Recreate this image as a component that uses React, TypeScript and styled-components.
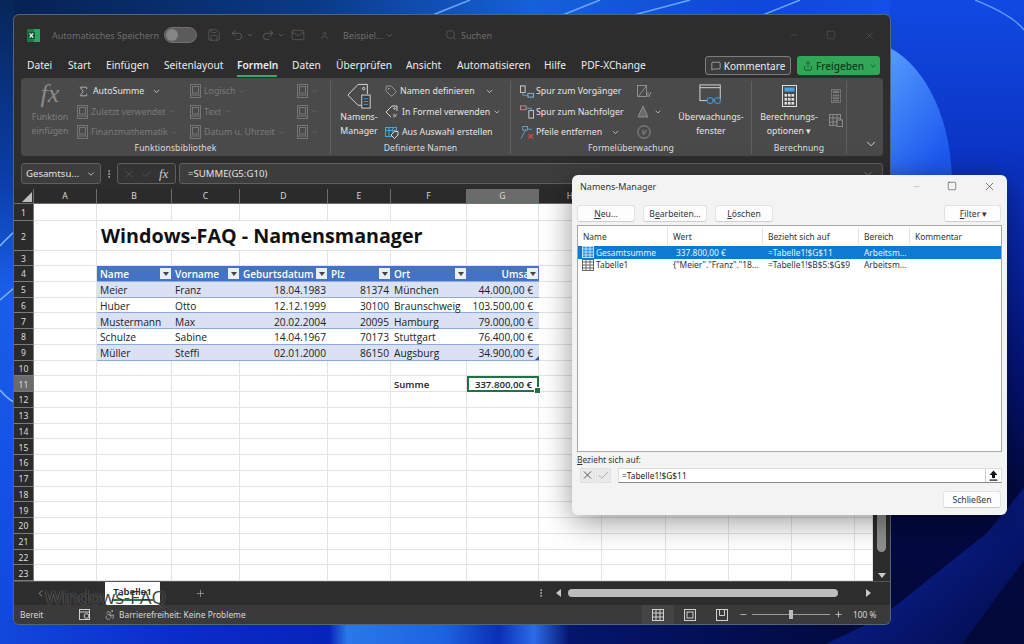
import React from "react";
import styled, { createGlobalStyle } from "styled-components";
import { Sigma, Undo2, Redo2, Search, Save, ChevronDown, ChevronLeft, Minus, Square, X, Plus, Check, Tag, MessageSquare, Share, User, Mail, MoreVertical, Accessibility } from "lucide-react";

const UI = `"Noto Sans", "Open Sans", sans-serif`;

const Global = createGlobalStyle`
  html, body { margin: 0; padding: 0; width: 1024px; height: 644px; overflow: hidden; background: #061f5c; }
  * { box-sizing: border-box; }
  body { font-family: ${UI}; }
`;

const Desktop = styled.div`
  position: relative;
  width: 1024px;
  height: 644px;
  padding: 15px 0 0 14px;
  overflow: hidden;
`;
const Wallpaper = styled.svg`
  position: absolute;
  inset: 0;
  width: 1024px;
  height: 644px;
`;
const ExcelWindow = styled.div`
  position: relative;
  width: 876px;
  height: 609px;
  display: flex;
  flex-direction: column;
  background: #2d2d2d;
  border-radius: 5px;
  overflow: hidden;
  box-shadow: 0 0 0 1px #56647a;
`;
const TitleBar = styled.div`
  height: 35px;
  flex: none;
  display: flex;
  align-items: center;
  padding: 5px 0 0 13px;
  color: #6d6d6d;
  font-size: 9px;
  white-space: nowrap;
`;
const Slot = styled.div<{ $w: number }>`
  width: ${(p) => p.$w}px;
  flex: none;
  display: flex;
  align-items: center;
  gap: 2px;
`;
const Toggle = styled.div`
  width: 33px;
  height: 16px;
  border-radius: 8px;
  background: #5b5b5b;
  border: 1px solid #707070;
  padding: 1px;
  &::before {
    content: "";
    display: block;
    width: 12px;
    height: 12px;
    border-radius: 50%;
    background: #858585;
  }
`;
const TabBar = styled.div`
  height: 28px;
  flex: none;
  display: flex;
  align-items: flex-start;
  padding-left: 13px;
  position: relative;
`;
const RibbonTab = styled.div<{ $w: number; $active?: boolean }>`
  width: ${(p) => p.$w}px;
  flex: none;
  height: 20px;
  margin-top: 6px;
  line-height: 19px;
  font-size: 10.2px;
  color: #ececec;
  white-space: nowrap;
  font-weight: ${(p) => (p.$active ? 600 : 400)};
  position: relative;
  ${(p) =>
    p.$active &&
    `&::after{content:"";position:absolute;left:0;width:40px;bottom:-1px;height:2px;background:#35a86a;}`}
`;
const TabActions = styled.div`
  margin-left: auto;
  margin-top: 6px;
  display: flex;
  gap: 6px;
  padding-right: 10px;
`;
const CommentButton = styled.div`
  width: 86px;
  height: 19px;
  border: 1px solid #7d7d7d;
  border-radius: 3px;
  background: #3b3b3b;
  display: flex;
  align-items: center;
  justify-content: center;
  gap: 3px;
  font-size: 10px;
  color: #ececec;
`;
const ShareButton = styled.div`
  width: 83px;
  height: 19px;
  border-radius: 3px;
  background: #2fa757;
  display: flex;
  align-items: center;
  gap: 3px;
  padding: 0 3px 0 6px;
  font-size: 10px;
  color: #0c3a1d;
  font-weight: 500;
  & > svg:last-child {
    margin-left: auto;
  }
`;
const Ribbon = styled.div`
  height: 78px;
  margin: 0 7px;
  flex: none;
  background: #4a4a4a;
  border-radius: 4px;
  display: flex;
  position: relative;
`;
const Group = styled.div<{ $w: number }>`
  width: ${(p) => p.$w}px;
  flex: none;
  display: flex;
  flex-direction: column;
  margin: 3px 0 2px;
  border-right: 1px solid #606060;
`;
const GroupBody = styled.div`
  height: 62px;
  display: flex;
  align-items: flex-start;
`;
const GroupLabel = styled.div`
  text-align: center;
  font-size: 8.6px;
  color: #dedede;
  line-height: 11px;
  letter-spacing: 0.1px;
`;
const BigButton = styled.div<{ $w: number; $ml?: number; $dim?: boolean }>`
  width: ${(p) => p.$w}px;
  margin-left: ${(p) => p.$ml ?? 0}px;
  flex: none;
  display: flex;
  flex-direction: column;
  align-items: center;
  text-align: center;
  font-size: 8.8px;
  line-height: 13.5px;
  color: ${(p) => (p.$dim ? "#7f7f7f" : "#e6e6e6")};
  height: 60px;
`;
const BigIcon = styled.div`
  height: 30px;
  display: flex;
  align-items: center;
  justify-content: center;
  flex: none;
`;
const FxGlyph = styled.span`
  font-family: "Liberation Serif", serif;
  font-style: italic;
  font-size: 26px;
  color: #8a8a8a;
  line-height: 1;
  padding-bottom: 5px;
`;
const SmallColumn = styled.div<{ $w: number; $ml?: number }>`
  width: ${(p) => p.$w}px;
  margin-left: ${(p) => p.$ml ?? 0}px;
  flex: none;
  display: flex;
  flex-direction: column;
`;
const SmallItem = styled.div<{ $dim?: boolean; $gap?: number }>`
  height: 20.5px;
  display: flex;
  align-items: center;
  gap: ${(p) => p.$gap ?? 3}px;
  white-space: nowrap;
  font-size: 8.8px;
  color: ${(p) => (p.$dim ? "#7a7a7a" : "#e6e6e6")};
`;
const CalcColumn = styled.div`
  width: 16px;
  margin-left: 6px;
  flex: none;
  display: flex;
  flex-direction: column;
  align-items: center;
  gap: 11px;
  padding-top: 8px;
`;
const Collapse = styled.div`
  position: absolute;
  right: 5px;
  bottom: 5px;
  color: #e6e6e6;
  display: flex;
`;
const FormulaRow = styled.div`
  height: 21px;
  margin: 7px 7px 5px;
  flex: none;
  display: flex;
  align-items: stretch;
  color: #e2e2e2;
  font-size: 9.6px;
`;
const NameBox = styled.div`
  width: 80px;
  background: #3d3d3d;
  border: 1px solid #5f5f5f;
  border-radius: 3px;
  display: flex;
  align-items: center;
  justify-content: space-between;
  padding: 0 4px;
`;
const Dots = styled.div`
  width: 16px;
  display: flex;
  align-items: center;
  justify-content: center;
`;
const FxBox = styled.div`
  width: 59px;
  border: 1px solid #5f5f5f;
  border-radius: 3px;
  background: #333;
  display: flex;
  align-items: center;
  gap: 6px;
  padding-left: 5px;
  margin-right: 3px;
  color: #666;
`;
const FxSmall = styled.span`
  font-family: "Liberation Serif", serif;
  font-style: italic;
  font-size: 13px;
  color: #cfcfcf;
`;
const FormulaInput = styled.div`
  flex: 1;
  background: #3d3d3d;
  border: 1px solid #5f5f5f;
  border-radius: 3px;
  display: flex;
  align-items: center;
  padding: 0 8px;
  justify-content: space-between;
`;
const SheetArea = styled.div`
  height: 392px;
  flex: none;
  display: flex;
`;
const Grid = styled.div`
  width: 859px;
  flex: none;
  display: grid;
  grid-template-columns: 20px 63px 75px 68px 88px 63px 76px 72px 63px 64px 63px 63px 63px 18px;
  grid-template-rows: 15px 17px 30px 15px repeat(20, 15.75px);
`;
const ColHead = styled.div<{ $sel?: boolean; $corner?: boolean }>`
  background: ${(p) => (p.$sel ? "#6b6b6b" : "#2b2b2b")};
  color: #d8d8d8;
  font-size: 8.6px;
  display: flex;
  align-items: center;
  justify-content: center;
  border-right: 1px solid #6d6d6d;
  border-bottom: 1px solid ${(p) => (p.$sel ? "#2f9a62" : "#6d6d6d")};
  position: relative;
  ${(p) =>
    p.$corner &&
    `&::after{content:"";position:absolute;right:1px;bottom:1px;border-style:solid;border-width:0 0 10px 10px;border-color:transparent transparent #bdbdbd transparent;}`}
`;
const RowHead = styled.div<{ $sel?: boolean }>`
  background: ${(p) => (p.$sel ? "#6b6b6b" : "#2b2b2b")};
  color: #dcdcdc;
  font-size: 8.6px;
  display: flex;
  align-items: center;
  justify-content: center;
  padding-top: 2px;
  border-bottom: 1px solid #7a7a7a;
  border-right: 1px solid #7a7a7a;
`;
type CellKind = "plain" | "head" | "band" | "even";
const cellBg: Record<CellKind, string> = { plain: "#fff", head: "#4472c4", band: "#d9e1f2", even: "#fff" };
const Cell = styled.div<{ $kind: CellKind; $right?: boolean; $bold?: boolean; $noLine?: boolean; $pad?: number; $title?: boolean; $active?: boolean; $corner?: boolean }>`
  position: relative;
  min-width: 0;
  background: ${(p) => cellBg[p.$kind]};
  border-bottom: 1px solid ${(p) => (p.$kind === "plain" ? "#e3e3e3" : "#8ea9db")};
  border-right: ${(p) => (p.$noLine ? "0" : p.$kind === "plain" ? "1px solid #e3e3e3" : "0")};
  color: ${(p) => (p.$kind === "head" ? "#fff" : "#222")};
  font-family: "Open Sans", sans-serif;
  font-size: ${(p) => (p.$kind === "head" ? 10 : p.$bold ? 9.6 : 10.2)}px;
  font-weight: ${(p) => (p.$bold || p.$kind === "head" ? 600 : 400)};
  display: flex;
  align-items: center;
  white-space: nowrap;
  justify-content: ${(p) => (p.$right ? "flex-end" : "flex-start")};
  padding: ${(p) => (p.$title ? 0 : 2)}px ${(p) => p.$pad ?? 2}px 0 3px;
  ${(p) => p.$title && `z-index:2;overflow:visible;`}
  ${(p) =>
    p.$active &&
    `outline:2px solid #217346;outline-offset:-2px;z-index:2;&::after{content:"";position:absolute;right:-3px;bottom:-3px;width:5px;height:5px;background:#217346;border:1px solid #fff;}`}
  ${(p) =>
    p.$corner &&
    `&::after{content:"";position:absolute;right:0;bottom:0;border-style:solid;border-width:0 0 4px 4px;border-color:transparent transparent #2f5597 transparent;}`}
`;
const Title = styled.span`
  font-family: "Open Sans", sans-serif;
  font-size: 19.7px;
  font-weight: 700;
  color: #111;
  margin-left: 1px;
  overflow: visible;
`;
const FilterBtn = styled.span`
  position: absolute;
  right: 1px;
  top: 2px;
  width: 11px;
  height: 11px;
  background: #e9edf6;
  display: flex;
  align-items: center;
  justify-content: center;
  &::before {
    content: "";
    border-style: solid;
    border-width: 4px 3px 0 3px;
    border-color: #444 transparent transparent transparent;
  }
`;
const VScroll = styled.div`
  width: 17px;
  flex: none;
  background: #2c2c2c;
  position: relative;
`;
const VThumb = styled.div`
  position: absolute;
  left: 4px;
  right: 4px;
  top: 24px;
  bottom: 29px;
  border-radius: 5px;
  background: #8f8f8f;
`;
const ArrowDown = styled.div`
  position: absolute;
  left: 5px;
  bottom: 3px;
  border-style: solid;
  border-width: 5px 4px 0 4px;
  border-color: #c8c8c8 transparent transparent transparent;
`;
const TabStrip = styled.div`
  height: 24px;
  flex: none;
  background: #2d2d2d;
  border-top: 1px solid #555;
  display: flex;
  align-items: center;
  position: relative;
  color: #c9c9c9;
`;
const SheetTab = styled.div`
  width: 55px;
  height: 23px;
  background: #fff;
  color: #222;
  font-size: 9.6px;
  font-weight: 600;
  text-align: center;
  line-height: 20px;
  border-radius: 0 0 3px 3px;
  margin-top: -1px;
  position: relative;
  &::after {
    content: "";
    position: absolute;
    left: 7px;
    right: 7px;
    bottom: 4px;
    height: 2px;
    background: #217346;
  }
`;
const Watermark = styled.div`
  position: absolute;
  left: 31px;
  top: 4px;
  font-size: 18.6px;
  line-height: 22px;
  font-family: "Open Sans", sans-serif;
  color: rgba(12, 12, 12, 0.8);
  text-shadow: 0 0 1.5px rgba(255, 255, 255, 0.55);
  z-index: 3;
  white-space: nowrap;
`;
const HTrack = styled.div`
  position: absolute;
  left: 522px;
  right: 5px;
  top: 3px;
  bottom: 4px;
  display: flex;
  align-items: center;
`;
const HThumb = styled.div`
  position: absolute;
  left: 32px;
  right: 47px;
  height: 8px;
  border-radius: 4px;
  background: #bdbdbd;
`;
const TriLeft = styled.div`
  position: absolute;
  left: 20px;
  border-style: solid;
  border-width: 4px 5px 4px 0;
  border-color: transparent #c8c8c8 transparent transparent;
`;
const TriRight = styled.div`
  position: absolute;
  right: 14px;
  border-style: solid;
  border-width: 4px 0 4px 5px;
  border-color: transparent transparent transparent #c8c8c8;
`;
const StatusBar = styled.div`
  height: 19px;
  flex: none;
  background: #3a3a3a;
  display: flex;
  align-items: center;
  padding-left: 6px;
  color: #d8d8d8;
  font-size: 8.4px;
  white-space: nowrap;
`;
const ViewBtn = styled.div<{ $active?: boolean }>`
  width: 32px;
  height: 19px;
  display: flex;
  align-items: center;
  justify-content: center;
  background: ${(p) => (p.$active ? "#444" : "transparent")};
`;
const Slider = styled.div`
  width: 78px;
  height: 1px;
  background: #9a9a9a;
  margin: 0 4px;
  position: relative;
  &::after {
    content: "";
    position: absolute;
    left: 37px;
    top: -4px;
    width: 4px;
    height: 9px;
    background: #bcbcbc;
  }
`;

const Dialog = styled.div`
  position: absolute;
  left: 572px;
  top: 175px;
  width: 435px;
  height: 340px;
  background: #f3f3f3;
  border-radius: 6px;
  box-shadow: 0 6px 30px rgba(0, 0, 0, 0.42);
  display: flex;
  flex-direction: column;
  padding: 0 5px;
  color: #222;
  font-size: 8.4px;
  z-index: 5;
`;
const DialogTitle = styled.div`
  height: 30px;
  flex: none;
  display: flex;
  align-items: center;
  padding: 0 0 8px 3px;
  font-size: 9px;
  color: #333;
`;
const WinControls = styled.div`
  margin-left: auto;
  display: flex;
  align-items: center;
  gap: 26px;
  padding-right: 6px;
  color: #333;
`;
const DialogButtons = styled.div`
  height: 20px;
  flex: none;
  display: flex;
  gap: 8px;
`;
const DButton = styled.div<{ $w: number; $push?: boolean }>`
  width: ${(p) => p.$w}px;
  height: 17px;
  background: #fdfdfd;
  border: 1px solid #e2e2e2;
  border-bottom-color: #cfcfcf;
  border-radius: 3px;
  display: flex;
  align-items: center;
  justify-content: center;
  font-size: 8.6px;
  color: #333;
  margin-left: ${(p) => (p.$push ? "auto" : "0")};
  margin-right: ${(p) => (p.$push ? "1px" : "0")};
`;
const ListBox = styled.div`
  height: 227px;
  flex: none;
  background: #fff;
  border: 1px solid #a8a8a8;
`;
const ListRow = styled.div<{ $selected?: boolean; $head?: boolean }>`
  display: grid;
  grid-template-columns: 90px 95px 96px 51px 1fr;
  height: ${(p) => (p.$head ? "18px" : "12.6px")};
  margin-bottom: ${(p) => (p.$head ? "1px" : "0")};
  margin-top: ${(p) => (p.$head ? "1px" : "0")};
  background: ${(p) => (p.$selected ? "#0f7bd0" : "transparent")};
  color: ${(p) => (p.$selected ? "#e9f4ff" : "#333")};
  white-space: nowrap;
`;
const ListCell = styled.div<{ $head?: boolean; $pad?: number }>`
  display: flex;
  align-items: center;
  gap: 2px;
  overflow: hidden;
  padding-left: ${(p) => p.$pad ?? 5}px;
  border-right: ${(p) => (p.$head ? "1px solid #e5e5e5" : "0")};
`;
const RefLabel = styled.div`
  height: 12px;
  flex: none;
  margin-top: 1px;
  display: flex;
  align-items: flex-end;
  color: #333;
`;
const RefRow = styled.div`
  display: flex;
  align-items: center;
  height: 16px;
  flex: none;
  margin-top: 2px;
  padding-left: 3px;
`;
const RefIcon = styled.div<{ $dark?: boolean }>`
  width: 15px;
  height: 15px;
  background: #e9e9e9;
  border: 1px solid #e0e0e0;
  display: flex;
  align-items: center;
  justify-content: center;
  color: ${(p) => (p.$dark ? "#555" : "#9a9a9a")};
  margin-right: 1px;
`;
const RefInput = styled.div`
  flex: 1;
  margin-left: 6px;
  height: 15px;
  background: #fff;
  border: 1px solid #ddd;
  border-bottom-color: #8a8a8a;
  display: flex;
  align-items: center;
  padding-left: 3px;
  position: relative;
`;
const RefUp = styled.div`
  position: absolute;
  right: 0;
  top: 0;
  bottom: 0;
  width: 16px;
  border-left: 1px solid #ccc;
  display: flex;
  align-items: center;
  justify-content: center;
`;
const DialogFooter = styled.div`
  display: flex;
  justify-content: flex-end;
  margin-top: 8px;
  padding-right: 1px;
`;

/* ---------- drawn icons ---------- */
const s = { fill: "none", stroke: "currentColor", strokeWidth: 1 } as const;
const BookIco = () => (
  <svg width="11" height="14" viewBox="0 0 11 14" {...s} color="#767676">
    <rect x="0.5" y="0.5" width="10" height="13" />
    <rect x="2.5" y="2.5" width="6" height="6.5" />
    <path d="M0.5 11h10" />
  </svg>
);
const ExcelLogo = () => (
  <svg width="13" height="13" viewBox="0 0 13 13">
    <rect width="13" height="13" rx="1" fill="#1d7a45" />
    <rect x="7" width="6" height="13" fill="#2da562" />
    <rect x="1" y="3" width="7" height="7" fill="#0f5a30" />
    <path d="M2.6 4.4l3.6 4.2M6.2 4.4L2.6 8.6" stroke="#fff" strokeWidth="1.1" />
  </svg>
);
const NameMgrIco = () => (
  <svg width="26" height="26" viewBox="0 0 26 28" fill="none" color="#e0e0e0">
    <path d="M1 13 L12 1.5 H22 V12" stroke="currentColor" />
    <path d="M1 13 L12 24 H16" stroke="currentColor" />
    <circle cx="18" cy="6" r="1.3" stroke="currentColor" />
    <rect x="16" y="13" width="9" height="14" fill="#3a3a3a" stroke="#d8d8d8" />
    <path d="M18 17h5M18 20h5M18 23h5" stroke="#4aa3e0" />
  </svg>
);
const TagFx = () => (
  <svg width="14" height="14" viewBox="0 0 14 14" fill="none" stroke="#d8d8d8">
    <path d="M1 7 L7 1 H12 V6 M1 7 L6 12" />
    <circle cx="9.5" cy="3.5" r="0.8" />
    <path d="M9 8.5v4M11.5 9l-1.5 3" stroke="#bbb" />
  </svg>
);
const FromSel = () => (
  <svg width="14" height="13" viewBox="0 0 14 13" fill="none">
    <rect x="0.5" y="1.5" width="11" height="9" stroke="#4aa3e0" />
    <path d="M0.5 4.5h11M4 1.5v9M8 1.5v9" stroke="#4aa3e0" />
    <path d="M6 9 L9.5 5.5 H13 V9 L9.5 12.5 Z" fill="#4a4a4a" stroke="#d8d8d8" />
  </svg>
);
const TraceA = () => (
  <svg width="14" height="13" viewBox="0 0 15 13" fill="none" stroke="#d0d0d0">
    <rect x="0.5" y="0.5" width="5" height="7" />
    <rect x="8.5" y="8.5" width="6" height="4" stroke="#8fb7d8" />
    <path d="M3 7.5V10.5H8.5" stroke="#5aa5dc" />
  </svg>
);
const TraceB = () => (
  <svg width="14" height="14" viewBox="0 0 15 14" fill="none" stroke="#d0d0d0">
    <rect x="0.5" y="0.5" width="6" height="4" stroke="#c88" />
    <rect x="9.5" y="5.5" width="5" height="8" />
    <path d="M6.5 3H12V5.5" stroke="#5aa5dc" />
  </svg>
);
const RemoveArrows = () => (
  <svg width="14" height="15" viewBox="0 0 15 15" fill="none">
    <rect x="3" y="1" width="5" height="4" stroke="#5aa5dc" />
    <path d="M1 14 L6 5 M8 4 H13" stroke="#5aa5dc" />
    <path d="M9 9l5 5M14 9l-5 5" stroke="#d8484c" strokeWidth="1.4" />
  </svg>
);
const ShowFx = () => (
  <svg width="15" height="14" viewBox="0 0 15 14" fill="none" stroke="#8e8e8e">
    <rect x="0.5" y="1.5" width="9" height="11" />
    <path d="M1 13L10 1M11 8v5M14 8l-2 5" />
  </svg>
);
const WarnIco = () => (
  <svg width="14" height="14" viewBox="0 0 14 14" fill="#6a6a6a" stroke="#8e8e8e">
    <path d="M6 1 L11 12 H1 Z" />
  </svg>
);
const EvalIco = () => (
  <svg width="14" height="14" viewBox="0 0 14 14" fill="none" stroke="#8e8e8e">
    <circle cx="7" cy="7" r="6.2" />
    <path d="M6 4.5v5M9.5 5L7 9.5" />
  </svg>
);
const WatchIco = () => (
  <svg width="26" height="24" viewBox="0 0 26 26" fill="none">
    <rect x="1" y="1" width="22" height="17" stroke="#dcdcdc" />
    <path d="M1 4h22" stroke="#dcdcdc" />
    <rect x="9" y="15" width="6" height="6" rx="2" fill="#4a4a4a" stroke="#3f8fd0" strokeWidth="1.3" />
    <rect x="17" y="15" width="6" height="6" rx="2" fill="#4a4a4a" stroke="#3f8fd0" strokeWidth="1.3" />
    <path d="M15 17h2" stroke="#3f8fd0" />
  </svg>
);
const CalcIco = ({ w = 15, h = 22, dim = false }: { w?: number; h?: number; dim?: boolean }) => (
  <svg width={w} height={h} viewBox="0 0 15 22" fill="none">
    <rect x="0.5" y="0.5" width="14" height="21" stroke={dim ? "#8a8a8a" : "#e0e0e0"} />
    <rect x="2.5" y="2.5" width="10" height="4" fill={dim ? "#777" : "#4aa3e0"} />
    {[9, 13, 17].map((y) =>
      [2.5, 6, 9.5].map((x) => <rect key={`${x}${y}`} x={x} y={y} width="2.6" height="2.6" fill={dim ? "#888" : "#e0e0e0"} />)
    )}
  </svg>
);
const SheetCalc = () => (
  <svg width="14" height="13" viewBox="0 0 14 13" fill="none" stroke="#8a8a8a">
    <rect x="0.5" y="0.5" width="11" height="11" />
    <path d="M0.5 4h11M4 0.5v11M8 0.5v11M0.5 8h11" />
    <rect x="8" y="6" width="5.5" height="6.5" fill="#4a4a4a" />
  </svg>
);
const TableIco = ({ sel }: { sel?: boolean }) => (
  <svg width="12" height="12" viewBox="0 0 12 12" fill={sel ? "#2a8fe0" : "#fff"} stroke={sel ? "#bcdcf5" : "#666"}>
    <rect x="0.5" y="0.5" width="11" height="11" />
    <path d="M0.5 3h11M0.5 6h11M0.5 9h11M4 0.5v11M8 0.5v11" fill="none" />
  </svg>
);
const UploadIco = () => (
  <svg width="9" height="11" viewBox="0 0 9 11" fill="#111">
    <path d="M4.5 0.5 L8.5 5 H6 V8 H3 V5 H0.5 Z" />
    <rect x="0.5" y="9.5" width="8" height="1.2" />
  </svg>
);
const GridView = () => (
  <svg width="12" height="12" viewBox="0 0 12 12" fill="none" stroke="#d0d0d0">
    <rect x="0.5" y="0.5" width="11" height="11" />
    <path d="M0.5 4h11M0.5 8h11M4 0.5v11M8 0.5v11" />
  </svg>
);
const PageView = () => (
  <svg width="12" height="12" viewBox="0 0 12 12" fill="none" stroke="#d0d0d0">
    <rect x="0.5" y="0.5" width="11" height="11" />
    <rect x="3" y="3" width="6" height="6" />
  </svg>
);
const BreakView = () => (
  <svg width="12" height="12" viewBox="0 0 12 12" fill="none" stroke="#d0d0d0">
    <rect x="0.5" y="0.5" width="11" height="11" />
    <path d="M3.5 0.5v6h5v-6" />
  </svg>
);
const MacroIco = () => (
  <svg width="12" height="11" viewBox="0 0 12 11" fill="none" stroke="#d0d0d0">
    <rect x="0.5" y="0.5" width="10" height="10" />
    <path d="M0.5 3h10" />
    <circle cx="7.5" cy="7" r="2.4" />
  </svg>
);

const tabs: [string, number][] = [
  ["Datei", 41], ["Start", 38], ["Einfügen", 58], ["Seitenlayout", 73], ["Formeln", 55], ["Daten", 44],
  ["Überprüfen", 70], ["Ansicht", 51], ["Automatisieren", 87], ["Hilfe", 37], ["PDF-XChange", 80],
];
const cols = ["A", "B", "C", "D", "E", "F", "G", "H", "I", "J", "K", "L", "M"];
const table = [
  ["Meier", "Franz", "18.04.1983", "81374", "München", "44.000,00 €"],
  ["Huber", "Otto", "12.12.1999", "30100", "Braunschweig", "103.500,00 €"],
  ["Mustermann", "Max", "20.02.2004", "20095", "Hamburg", "79.000,00 €"],
  ["Schulze", "Sabine", "14.04.1967", "70173", "Stuttgart", "76.400,00 €"],
  ["Müller", "Steffi", "02.01.2000", "86150", "Augsburg", "34.900,00 €"],
];
const heads = ["Name", "Vorname", "Geburtsdatum", "Plz", "Ort", "Umsatz"];

function renderCell(row: number, col: number) {
  const key = `${row}-${col}`;
  if (row === 2 && col === 1) return <Cell key={key} $kind="plain" $title $noLine><Title>Windows-FAQ - Namensmanager</Title></Cell>;
  if (row === 2 && col > 1 && col < 5) return <Cell key={key} $kind="plain" $noLine />;
  if (row === 4 && col >= 1 && col <= 6) {
    return (
      <Cell key={key} $kind="head" $right={col === 6} $pad={1}>
        {heads[col - 1]}
        <FilterBtn />
      </Cell>
    );
  }
  if (row >= 5 && row <= 9 && col >= 1 && col <= 6) {
    const kind: CellKind = row % 2 === 1 ? "band" : "even";
    const pad = col === 6 ? 6 : 2;
    return (
      <Cell key={key} $kind={kind} $right={col === 3 || col === 4 || col === 6} $pad={pad} $corner={row === 9 && col === 6}>
        {table[row - 5][col - 1]}
      </Cell>
    );
  }
  if (row === 11 && col === 5) return <Cell key={key} $kind="plain" $bold>Summe</Cell>;
  if (row === 11 && col === 6) return <Cell key={key} $kind="plain" $bold $right $pad={6} $active>337.800,00 €</Cell>;
  return <Cell key={key} $kind="plain" />;
}

const Caret = ({ c = "#9a9a9a", size = 9 }: { c?: string; size?: number }) => <ChevronDown size={size} color={c} strokeWidth={2} />;

export default function App() {
  const rowNums = Array.from({ length: 23 }, (_, i) => i + 1);
  return (
    <Desktop>
      <Global />
      <Wallpaper viewBox="0 0 1024 644">
        <defs>
          <linearGradient id="top" x1="0" x2="1" y1="0" y2="0">
            <stop offset="0" stopColor="#062050" />
            <stop offset="0.35" stopColor="#0a3a86" />
            <stop offset="0.6" stopColor="#1561d8" />
            <stop offset="0.85" stopColor="#0f47d8" />
            <stop offset="1" stopColor="#1450e6" />
          </linearGradient>
          <linearGradient id="right" x1="0" x2="0" y1="0" y2="1">
            <stop offset="0" stopColor="#1149e2" />
            <stop offset="0.3" stopColor="#0a2fbc" />
            <stop offset="0.55" stopColor="#04157e" />
            <stop offset="0.75" stopColor="#020a44" />
            <stop offset="1" stopColor="#020838" />
          </linearGradient>
          <linearGradient id="orb" x1="0" x2="0.6" y1="0" y2="1">
            <stop offset="0" stopColor="#58a0ff" />
            <stop offset="1" stopColor="#1c58ee" />
          </linearGradient>
          <linearGradient id="band" x1="0" x2="1" y1="0" y2="1">
            <stop offset="0" stopColor="#0d2bb0" />
            <stop offset="1" stopColor="#020a48" />
          </linearGradient>
          <linearGradient id="leftStrip" x1="0" x2="0" y1="0" y2="1">
            <stop offset="0" stopColor="#072658" />
            <stop offset="0.28" stopColor="#0a3ea8" />
            <stop offset="0.45" stopColor="#1a5ee8" />
            <stop offset="1" stopColor="#0f48dc" />
          </linearGradient>
          <linearGradient id="bottom" x1="0" x2="1" y1="0" y2="0">
            <stop offset="0" stopColor="#1248dc" />
            <stop offset="0.2" stopColor="#0a2cc8" />
            <stop offset="0.37" stopColor="#0724b8" />
            <stop offset="0.39" stopColor="#2a78ea" />
            <stop offset="0.5" stopColor="#1c62e0" />
            <stop offset="0.56" stopColor="#0b2fb4" />
            <stop offset="0.6" stopColor="#2c6cea" />
            <stop offset="0.64" stopColor="#04156c" />
            <stop offset="1" stopColor="#020838" />
          </linearGradient>
        </defs>
        <rect width="1024" height="644" fill="url(#right)" />
        <rect width="890" height="20" fill="url(#top)" />
        <rect y="0" width="14" height="644" fill="url(#leftStrip)" />
        <rect y="620" width="890" height="24" fill="url(#bottom)" />
        <path d="M430 16 L470 0 M560 16 L600 0 M630 16 L690 0 M760 16 L800 0" stroke="#6aa6f5" strokeWidth="1.5" />
        <path d="M0 246 C5 240 10 236 14 232 M0 300 L14 288 M0 390 C5 396 10 400 14 402" stroke="#7fb3fa" strokeWidth="1.5" fill="none" />
        <path d="M884 45 C920 60 950 110 952 178 L884 178 Z" fill="url(#orb)" />
        <path d="M975 0 C995 8 1015 18 1024 30" stroke="#5f96fa" strokeWidth="1.5" fill="none" />
        <path d="M880 618 L987 533 L1024 488 L1024 560 L962 644 L826 644 Z" fill="url(#band)" />
      </Wallpaper>

      <ExcelWindow>
        <TitleBar>
          <Slot $w={25}><ExcelLogo /></Slot>
          <Slot $w={112}>Automatisches Speichern</Slot>
          <Slot $w={43}><Toggle /></Slot>
          <Slot $w={23}><Save size={14} strokeWidth={1} /></Slot>
          <Slot $w={31}><Undo2 size={14} strokeWidth={1.2} /><Caret c="#6d6d6d" size={8} /></Slot>
          <Slot $w={30}><Redo2 size={14} strokeWidth={1.2} /><Caret c="#6d6d6d" size={8} /></Slot>
          <Slot $w={29}><Mail size={14} strokeWidth={1} /></Slot>
          <Slot $w={23}><User size={9} strokeWidth={1.2} /></Slot>
          <Slot $w={102}>Beispiel...<Caret c="#6d6d6d" /></Slot>
          <Slot $w={16}><Search size={12} strokeWidth={1.2} /></Slot>
          <Slot $w={328}>Suchen</Slot>
          <Slot $w={37}><Minus size={10} strokeWidth={1} /></Slot>
          <Slot $w={38}><Square size={10} strokeWidth={1} /></Slot>
          <Slot $w={20}><X size={11} strokeWidth={1} /></Slot>
        </TitleBar>
        <TabBar>
          {tabs.map(([t, w]) => (
            <RibbonTab key={t} $w={w} $active={t === "Formeln"}>{t}</RibbonTab>
          ))}
          <TabActions>
            <CommentButton><MessageSquare size={10} strokeWidth={1.3} />Kommentare</CommentButton>
            <ShareButton><Share size={10} strokeWidth={1.5} />Freigeben<Caret c="#0c3a1d" size={8} /></ShareButton>
          </TabActions>
        </TabBar>
        <Ribbon>
          <Group $w={310}>
            <GroupBody>
              <BigButton $w={42} $ml={8} $dim>
                <BigIcon><FxGlyph>fx</FxGlyph></BigIcon>
                Funktion<br />einfügen
              </BigButton>
              <SmallColumn $w={113} $ml={6}>
                <SmallItem><Sigma size={13} strokeWidth={1.2} />AutoSumme&nbsp;&nbsp;<Caret c="#e0e0e0" /></SmallItem>
                <SmallItem $dim><BookIco />Zuletzt verwendet<Caret c="#777" size={7} /></SmallItem>
                <SmallItem $dim><BookIco />Finanzmathematik<Caret c="#777" size={7} /></SmallItem>
              </SmallColumn>
              <SmallColumn $w={107}>
                <SmallItem $dim><BookIco />Logisch<Caret c="#777" size={7} /></SmallItem>
                <SmallItem $dim><BookIco />Text<Caret c="#777" size={7} /></SmallItem>
                <SmallItem $dim><BookIco />Datum u. Uhrzeit<Caret c="#777" size={7} /></SmallItem>
              </SmallColumn>
              <SmallColumn $w={26}>
                <SmallItem $dim><BookIco /><Caret c="#777" size={7} /></SmallItem>
                <SmallItem $dim><BookIco /><Caret c="#777" size={7} /></SmallItem>
                <SmallItem $dim><BookIco /><Caret c="#777" size={7} /></SmallItem>
              </SmallColumn>
            </GroupBody>
            <GroupLabel>Funktionsbibliothek</GroupLabel>
          </Group>
          <Group $w={180}>
            <GroupBody>
              <BigButton $w={46} $ml={5}>
                <BigIcon><NameMgrIco /></BigIcon>
                Namens-<br />Manager
              </BigButton>
              <SmallColumn $w={125} $ml={3}>
                <SmallItem><Tag size={12} strokeWidth={1} />Namen definieren&nbsp;&nbsp;&nbsp;<Caret c="#e0e0e0" /></SmallItem>
                <SmallItem><TagFx />In Formel verwenden<Caret c="#e0e0e0" size={8} /></SmallItem>
                <SmallItem><FromSel />Aus Auswahl erstellen</SmallItem>
              </SmallColumn>
            </GroupBody>
            <GroupLabel>Definierte Namen</GroupLabel>
          </Group>
          <Group $w={241}>
            <GroupBody>
              <SmallColumn $w={117} $ml={9}>
                <SmallItem $gap={2}><TraceA />Spur zum Vorgänger</SmallItem>
                <SmallItem $gap={2}><TraceB />Spur zum Nachfolger</SmallItem>
                <SmallItem $gap={2}><RemoveArrows />Pfeile entfernen&nbsp;&nbsp;&nbsp;<Caret c="#e0e0e0" /></SmallItem>
              </SmallColumn>
              <SmallColumn $w={33}>
                <SmallItem><ShowFx /></SmallItem>
                <SmallItem><WarnIco /><Caret c="#e0e0e0" size={8} /></SmallItem>
                <SmallItem><EvalIco /></SmallItem>
              </SmallColumn>
              <BigButton $w={72} $ml={5}>
                <BigIcon><WatchIco /></BigIcon>
                Überwachungs-<br />fenster
              </BigButton>
            </GroupBody>
            <GroupLabel>Formelüberwachung</GroupLabel>
          </Group>
          <Group $w={95}>
            <GroupBody>
              <BigButton $w={66} $ml={4}>
                <BigIcon><CalcIco /></BigIcon>
                Berechnungs-<br />optionen ▾
              </BigButton>
              <CalcColumn>
                <CalcIco w={10} h={14} dim />
                <SheetCalc />
              </CalcColumn>
            </GroupBody>
            <GroupLabel>Berechnung</GroupLabel>
          </Group>
          <Collapse><ChevronDown size={14} strokeWidth={1.5} /></Collapse>
        </Ribbon>
        <FormulaRow>
          <NameBox>Gesamtsu...<Caret c="#d0d0d0" size={10} /></NameBox>
          <Dots><MoreVertical size={10} color="#c8c8c8" /></Dots>
          <FxBox>
            <X size={12} strokeWidth={1} />
            <Check size={12} strokeWidth={1} />
            <FxSmall>fx</FxSmall>
          </FxBox>
          <FormulaInput>=SUMME(G5:G10)<Caret c="#888" size={12} /></FormulaInput>
        </FormulaRow>
        <SheetArea>
          <Grid>
            <ColHead $corner />
            {cols.map((c) => (
              <ColHead key={c} $sel={c === "G"}>{c === "M" ? "" : c}</ColHead>
            ))}
            {rowNums.map((r) => (
              <React.Fragment key={r}>
                <RowHead $sel={r === 11}>{r}</RowHead>
                {cols.map((_, i) => renderCell(r, i))}
              </React.Fragment>
            ))}
          </Grid>
          <VScroll>
            <VThumb />
            <ArrowDown />
          </VScroll>
        </SheetArea>
        <TabStrip>
          <Slot $w={21} />
          <Slot $w={70}><ChevronLeft size={11} strokeWidth={1.4} /></Slot>
          <SheetTab>Tabelle1</SheetTab>
          <Slot $w={35} />
          <Plus size={11} strokeWidth={1.2} />
          <Watermark>Windows-FAQ</Watermark>
          <HTrack>
            <MoreVertical size={10} />
            <TriLeft />
            <HThumb />
            <TriRight />
          </HTrack>
        </TabStrip>
        <StatusBar>
          <Slot $w={59}>Bereit</Slot>
          <Slot $w={25}><MacroIco /></Slot>
          <Slot $w={15}><Accessibility size={12} strokeWidth={1.2} /></Slot>
          <Slot $w={523}>Barrierefreiheit: Keine Probleme</Slot>
          <ViewBtn $active><GridView /></ViewBtn>
          <ViewBtn><PageView /></ViewBtn>
          <ViewBtn><BreakView /></ViewBtn>
          <Slot $w={1} />
          <Minus size={9} />
          <Slider />
          <Plus size={9} />
          <Slot $w={10} />
          100 %
        </StatusBar>
      </ExcelWindow>

      <Dialog>
        <DialogTitle>
          Namens-Manager
          <WinControls>
            <Minus size={9} color="#bbb" />
            <Square size={10} strokeWidth={1.3} />
            <X size={13} strokeWidth={1.2} />
          </WinControls>
        </DialogTitle>
        <DialogButtons>
          <DButton $w={58}><u>N</u>eu...</DButton>
          <DButton $w={64}>B<u>e</u>arbeiten...</DButton>
          <DButton $w={58}><u>L</u>öschen</DButton>
          <DButton $w={57} $push>&nbsp;<u>F</u>ilter ▾</DButton>
        </DialogButtons>
        <ListBox>
          <ListRow $head>
            <ListCell $head>Name</ListCell>
            <ListCell $head>Wert</ListCell>
            <ListCell $head>Bezieht sich auf</ListCell>
            <ListCell $head>Bereich</ListCell>
            <ListCell>Kommentar</ListCell>
          </ListRow>
          <ListRow $selected>
            <ListCell $pad={4}><TableIco sel />Gesamtsumme</ListCell>
            <ListCell $pad={8}>337.800,00 €</ListCell>
            <ListCell>=Tabelle1!$G$11</ListCell>
            <ListCell>Arbeitsm...</ListCell>
            <ListCell />
          </ListRow>
          <ListRow>
            <ListCell $pad={4}><TableIco />Tabelle1</ListCell>
            <ListCell>{'{"Meier"."Franz"."18...'}</ListCell>
            <ListCell>=Tabelle1!$B$5:$G$9</ListCell>
            <ListCell>Arbeitsm...</ListCell>
            <ListCell />
          </ListRow>
        </ListBox>
        <RefLabel><span><u>B</u>ezieht sich auf:</span></RefLabel>
        <RefRow>
          <RefIcon $dark><X size={14} strokeWidth={1.8} /></RefIcon>
          <RefIcon><Check size={13} strokeWidth={1.4} /></RefIcon>
          <RefInput>
            =Tabelle1!$G$11
            <RefUp><UploadIco /></RefUp>
          </RefInput>
        </RefRow>
        <DialogFooter>
          <DButton $w={58}>Schließen</DButton>
        </DialogFooter>
      </Dialog>
    </Desktop>
  );
}
